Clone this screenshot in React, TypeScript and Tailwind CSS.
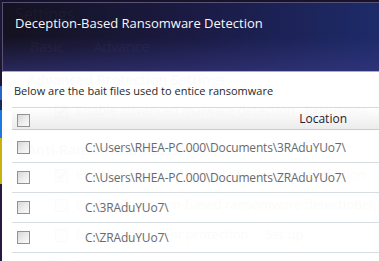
import React from "react";

function Box({ checked = false }: { checked?: boolean }) {
  return (
    <div className="w-[13px] h-[13px] shrink-0 border border-[#8f8f8f] bg-gradient-to-br from-[#d6d6d6] via-[#ececec] to-[#fbfbfb] relative">
      {checked && (
        <svg viewBox="0 0 13 13" className="absolute inset-0 w-full h-full">
          <path d="M2.5 6.5 L5.5 9.5 L11 2.5" stroke="#2c5fb0" strokeWidth="2" fill="none" />
        </svg>
      )}
    </div>
  );
}

const paths = [
  "C:\\Users\\RHEA-PC.000\\Documents\\3RAduYUo7\\",
  "C:\\Users\\RHEA-PC.000\\Documents\\ZRAduYUo7\\",
  "C:\\3RAduYUo7\\",
  "C:\\ZRAduYUo7\\",
];

export default function App() {
  return (
    <div
      className="relative w-[379px] h-[261px] overflow-hidden bg-[#1a1530]"
      style={{ fontFamily: '"Open Sans", "Noto Sans", sans-serif' }}
    >
      {/* background application window */}
      <div className="flex h-full">
        <div className="w-[2px] flex flex-col shrink-0">
          <div className="h-[86px] bg-[#1c1733]" />
          <div className="h-[14px] bg-[#2566c8]" />
          <div className="h-[10px] bg-[#1a2a55]" />
          <div className="h-[28px] bg-[#1f78e0]" />
          <div className="h-[46px] bg-[#c9b20c]" />
          <div className="flex-1 bg-[#2a1844]" />
        </div>
        <div className="flex-1 flex flex-col whitespace-nowrap">
          <div className="h-[72px] shrink-0 bg-[#1b1838] flex flex-col pl-[13px] pt-[3px]">
            <div className="text-[16px] leading-[22px] text-[#e0e0f0]">Settings</div>
            <div className="flex gap-[30px] pl-[15px] mt-[12px] text-[14px] leading-[20px] text-[#d0d0e8]">
              <span>Basic</span>
              <span>Advance</span>
            </div>
          </div>
          <div className="flex-1 bg-white flex flex-col pl-[25px] text-[#8a8a8a] text-[13px]">
            <div className="mt-[-2px] text-[14px] leading-[20px] font-semibold text-[#7088cc]">Advanced Protection Settings</div>
            <div className="flex items-center mt-[12px] h-[18px]">
              <div className="ml-[28px]"><Box checked /></div>
              <span className="ml-[8px] w-[229px] shrink-0">Enable advanced malware detection</span>
              <span>Exclusions</span>
            </div>
            <div className="mt-[20px] text-[14px] leading-[20px] font-semibold text-[#7088cc]">Anti-Ransomware Settings</div>
            <div className="flex items-center mt-[4px] h-[22px]">
              <div className="ml-[28px]"><Box checked /></div>
              <span className="ml-[8px]">Enable behavioral-based ransomware detection</span>
            </div>
            <div className="flex items-center mt-[8px] h-[22px]">
              <div className="ml-[28px]"><Box /></div>
              <span className="ml-[8px] w-[279px] shrink-0">Enable deception-based ransomware detection</span>
              <span>Set up</span>
            </div>
            <div className="flex items-center mt-[8px] h-[22px]">
              <div className="ml-[28px]"><Box /></div>
              <span className="ml-[8px] w-[189px] shrink-0">Enable document protection</span>
              <span>Set up</span>
            </div>
            <div className="mt-[10px] text-[14px] leading-[20px] font-semibold text-[#7088cc]">Self-Defense:</div>
          </div>
        </div>
      </div>

      {/* dialog window */}
      <div className="absolute left-[2px] top-0 right-0 bottom-0 flex flex-col opacity-[0.97]">
        <div className="relative h-[72px] shrink-0 bg-gradient-to-r from-[#141120] via-[#1b1b44] to-[#1e2c6c] border-t-[2px] border-[#17132a]">
          <div className="absolute inset-0 bg-gradient-to-b from-transparent via-transparent to-[#3a3a86]/60" />
          <div className="relative h-full border-t border-l border-[#5a5578] border-b border-b-[#a9b3cf] pl-[12px] pt-[10px]">
            <div className="text-[13px] leading-[20px] text-white">Deception-Based Ransomware Detection</div>
          </div>
        </div>
        <div className="flex-1 bg-white flex flex-col">
          <div className="pl-[12px] pt-[11px] text-[11px] leading-[16px] text-[#222222]">
            Below are the bait files used to entice ransomware
          </div>
          <div className="ml-[10px] mt-[8px] flex flex-col">
            <div className="h-[23px] border-t border-b border-t-[#d4d8dd] border-b-[#c6cbd1] bg-gradient-to-b from-white to-[#ececec] flex pl-[5px] pt-[6px]">
              <Box />
              <span className="ml-auto mr-[32px] -mt-[6px] leading-[21px] text-[12px] text-[#1c1428]">Location</span>
            </div>
            {paths.map((p, i) => (
              <div
                key={i}
                className={`${i === 0 ? "h-[33px] pt-[3px]" : "h-[30px]"} border-b border-[#d6dbe0] flex items-center pl-[5px]`}
              >
                <Box />
                <span className="ml-[55px] text-[12px] tracking-[-0.17px] text-[#666666] whitespace-nowrap">{p}</span>
              </div>
            ))}
          </div>
        </div>
      </div>
    </div>
  );
}
